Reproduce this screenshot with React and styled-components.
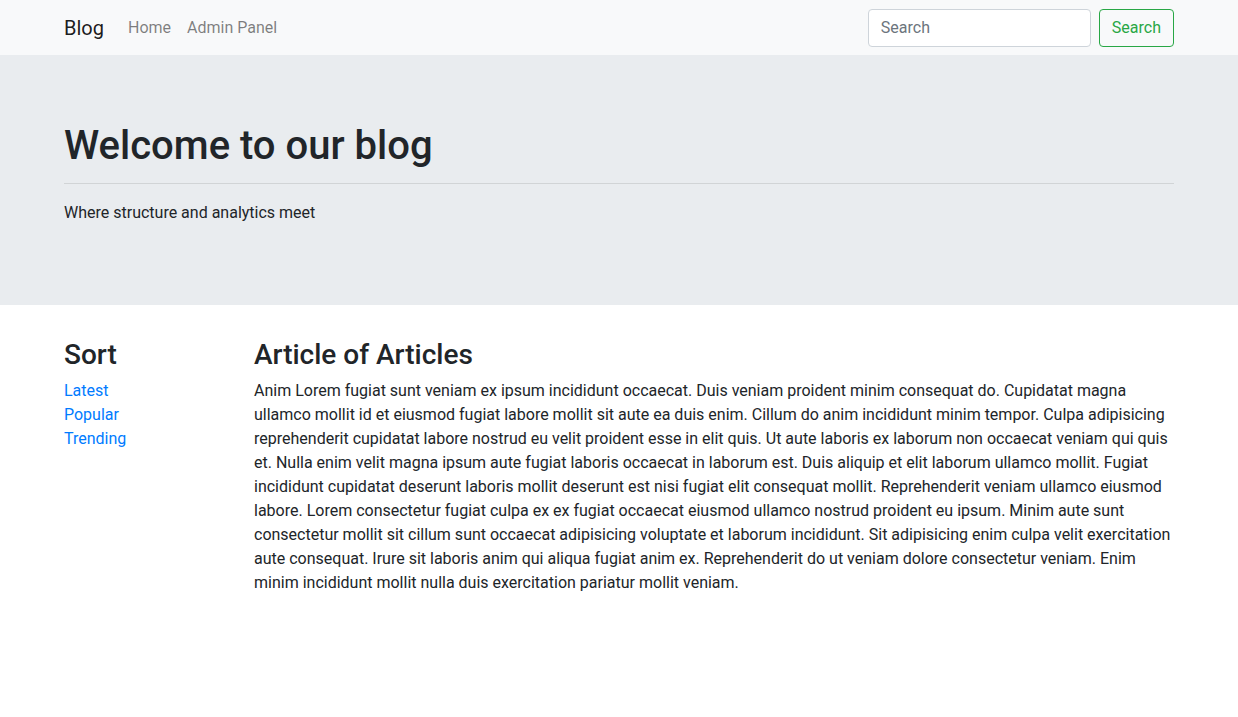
import React from "react";
import styled, { createGlobalStyle } from "styled-components";

const Global = createGlobalStyle`
  *, *::before, *::after { box-sizing: border-box; }
  body {
    margin: 0;
    font-family: Roboto, "Liberation Sans", sans-serif;
    font-size: 16px;
    line-height: 1.5;
    color: #212529;
    background: #fff;
  }
`;

const Navbar = styled.nav`
  background: #f8f9fa;
  height: 55px;
  display: flex;
  align-items: center;
`;

const Container = styled.div`
  width: 1140px;
  margin: 0 auto;
  padding: 0 15px;
`;

const NavInner = styled(Container)`
  display: flex;
  align-items: center;
  justify-content: space-between;
`;

const Left = styled.div`
  display: flex;
  align-items: center;
`;

const Brand = styled.a`
  font-size: 20px;
  line-height: 30px;
  padding: 5px 0;
  margin-right: 16px;
  color: rgba(0, 0, 0, 0.9);
  text-decoration: none;
`;

const NavLink = styled.a`
  padding: 8px 8px;
  color: rgba(0, 0, 0, 0.5);
  text-decoration: none;
`;

const Form = styled.form`
  display: flex;
  align-items: center;
  gap: 8px;
`;

const Input = styled.input`
  width: 223px;
  height: 38px;
  padding: 6px 12px;
  font: inherit;
  font-size: 16px;
  color: #495057;
  background: #fff;
  border: 1px solid #ced4da;
  border-radius: 4px;
  &::placeholder { color: #6c757d; }
`;

const Button = styled.button`
  height: 38px;
  padding: 6px 12px;
  font: inherit;
  font-size: 16px;
  color: #28a745;
  background: transparent;
  border: 1px solid #28a745;
  border-radius: 4px;
`;

const Jumbotron = styled.header`
  background: #e9ecef;
  padding: 64px 0;
  margin-bottom: 32px;
`;

const Title = styled.h1`
  margin: 3px 0 0;
  font-size: 40px;
  font-weight: 500;
  line-height: 48px;
`;

const Rule = styled.hr`
  margin: 13px 0 17px;
  border: 0;
  border-top: 1px solid rgba(0, 0, 0, 0.1);
`;

const Lead = styled.p`
  margin: 0 0 16px;
`;

const Row = styled.div`
  display: flex;
  margin: 0 -15px;
`;

const Col = styled.div`
  flex: 0 0 ${(p) => (p.$span / 12) * 100}%;
  max-width: ${(p) => (p.$span / 12) * 100}%;
  padding: 0 15px;
`;

const H2 = styled.h2`
  margin: 1px 0 7px;
  font-size: 28px;
  font-weight: 500;
  line-height: 1.2;
`;

const SortList = styled.ul`
  list-style: none;
  margin: 0;
  padding: 0;
`;

const SortLink = styled.a`
  color: #007bff;
  text-decoration: none;
`;

const Body = styled.p`
  margin: 0 0 16px;
`;

const text =
  "Anim Lorem fugiat sunt veniam ex ipsum incididunt occaecat. Duis veniam proident minim consequat do. Cupidatat magna ullamco mollit id et eiusmod fugiat labore mollit sit aute ea duis enim. Cillum do anim incididunt minim tempor. Culpa adipisicing reprehenderit cupidatat labore nostrud eu velit proident esse in elit quis. Ut aute laboris ex laborum non occaecat veniam qui quis et. Nulla enim velit magna ipsum aute fugiat laboris occaecat in laborum est. Duis aliquip et elit laborum ullamco mollit. Fugiat incididunt cupidatat deserunt laboris mollit deserunt est nisi fugiat elit consequat mollit. Reprehenderit veniam ullamco eiusmod labore. Lorem consectetur fugiat culpa ex ex fugiat occaecat eiusmod ullamco nostrud proident eu ipsum. Minim aute sunt consectetur mollit sit cillum sunt occaecat adipisicing voluptate et laborum incididunt. Sit adipisicing enim culpa velit exercitation aute consequat. Irure sit laboris anim qui aliqua fugiat anim ex. Reprehenderit do ut veniam dolore consectetur veniam. Enim minim incididunt mollit nulla duis exercitation pariatur mollit veniam.";

export default function App() {
  return (
    <>
      <Global />
      <Navbar>
        <NavInner>
          <Left>
            <Brand href="#">Blog</Brand>
            <NavLink href="#">Home</NavLink>
            <NavLink href="#">Admin Panel</NavLink>
          </Left>
          <Form onSubmit={(e) => e.preventDefault()}>
            <Input type="search" placeholder="Search" />
            <Button type="submit">Search</Button>
          </Form>
        </NavInner>
      </Navbar>
      <Jumbotron>
        <Container>
          <Title>Welcome to our blog</Title>
          <Rule />
          <Lead>Where structure and analytics meet</Lead>
        </Container>
      </Jumbotron>
      <Container>
        <Row>
          <Col $span={2}>
            <H2>Sort</H2>
            <SortList>
              <li><SortLink href="#">Latest</SortLink></li>
              <li><SortLink href="#">Popular</SortLink></li>
              <li><SortLink href="#">Trending</SortLink></li>
            </SortList>
          </Col>
          <Col $span={10}>
            <H2>Article of Articles</H2>
            <Body>{text}</Body>
          </Col>
        </Row>
      </Container>
    </>
  );
}
